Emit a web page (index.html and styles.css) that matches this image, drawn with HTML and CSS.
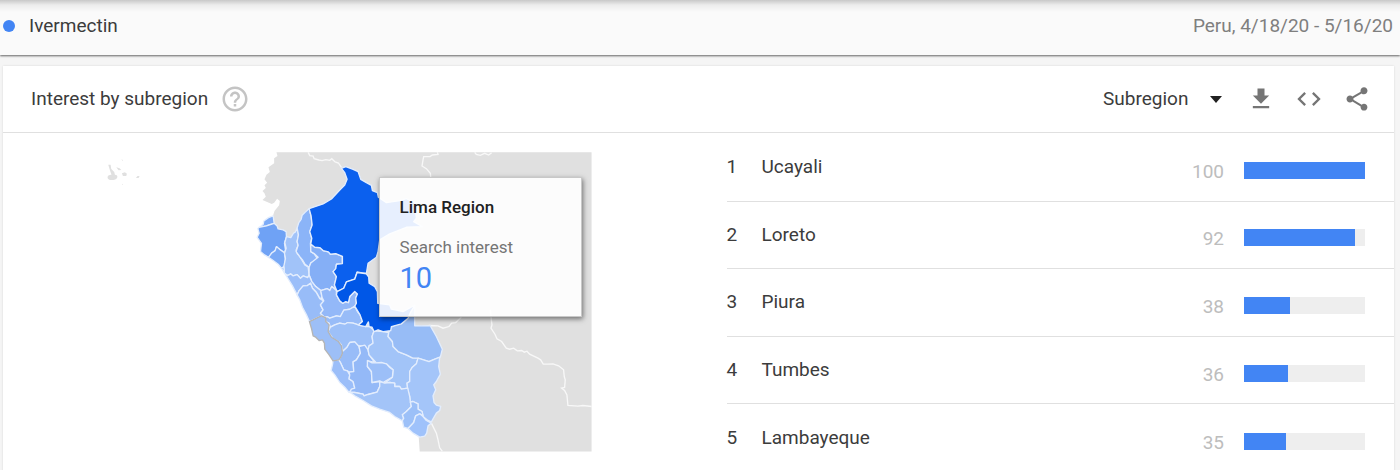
FILE: index.html
```html
<!DOCTYPE html>
<html lang="en">
<head>
    <meta charset="UTF-8">
    <meta name="viewport" content="width=device-width, initial-scale=1.0">
    <title>Interest by subregion</title>
    <link rel="stylesheet" href="styles.css">
</head>
<body>
    <header class="topbar">
        <span class="term"><span class="dot"></span>Ivermectin</span>
        <span class="range">Peru, 4/18/20 - 5/16/20</span>
    </header>

    <main class="card">
        <div class="card-header">
            <h2>Interest by subregion</h2>
            <button type="button" class="icon-button help" aria-label="Help">
                <svg width="30" height="30" viewBox="0 0 24 24"><path d="M11 18h2v-2h-2v2zm1-16C6.480 2 2 6.480 2 12s4.480 10 10 10 10-4.480 10-10S17.520 2 12 2zm0 18c-4.410 0-8-3.590-8-8s3.590-8 8-8 8 3.590 8 8-3.590 8-8 8zm0-14c-2.210 0-4 1.790-4 4h2c0-1.100.9-2 2-2s2 .9 2 2c0 2-3 1.750-3 5h2c0-2.250 3-2.500 3-5 0-2.210-1.790-4-4-4z"/></svg>
            </button>
            <div class="tools">
                <div class="picker">
                    <select class="resolution" aria-label="Resolution">
                        <option>Subregion</option>
                        <option>City</option>
                    </select>
                    <svg class="arrow" width="12" height="7" viewBox="0 0 12 7"><path d="M0 0h12L6 7z"/></svg>
                </div>
                <button type="button" class="icon-button" aria-label="Download">
                    <svg width="28" height="28" viewBox="0 0 24 24"><path d="M19 9h-4V3H9v6H5l7 7 7-7zM5 18v2h14v-2H5z"/></svg>
                </button>
                <button type="button" class="icon-button" aria-label="Embed">
                    <svg width="28" height="28" viewBox="0 0 24 24"><path d="M9.400 16.600L4.800 12l4.600-4.600L8 6l-6 6 6 6 1.400-1.400zm5.200 0l4.600-4.600-4.600-4.600L16 6l6 6-6 6-1.400-1.400z"/></svg>
                </button>
                <button type="button" class="icon-button" aria-label="Share">
                    <svg width="28" height="28" viewBox="0 0 24 24"><path d="M18 16.080c-.76 0-1.440.3-1.960.77L8.910 12.700c.05-.23.09-.46.09-.7s-.04-.47-.09-.7l7.050-4.110c.54.5 1.250.81 2.040.81 1.660 0 3-1.340 3-3s-1.340-3-3-3-3 1.340-3 3c0 .24.04.47.09.7L8.040 9.810C7.500 9.310 6.790 9 6 9c-1.660 0-3 1.340-3 3s1.340 3 3 3c.79 0 1.500-.31 2.040-.81l7.120 4.160c-.05.21-.08.43-.08.65 0 1.610 1.310 2.920 2.920 2.920s2.920-1.310 2.920-2.920-1.310-2.920-2.920-2.920z"/></svg>
                </button>
            </div>
        </div>

        <div class="card-body">
            <div class="map">
                <svg class="map-svg" viewBox="-711 36 2088 900">
                    <!-- neighbouring countries -->
                    <g class="land">
                        <path d="M110 37H1056V935H540L537 890 500 800 300 600 250 400 120 300 103 250 99 230 104 213 118 196 120 183 112 176 103 188 96 192 82 186 68 180 78 170 74 160 68 153 78 144 74 136 82 128 74 118 80 104 90 96 86 82 103 70 103 55 113 48Z"/>
                        <path d="M-395 74l7 0 2 13 9 9 2 8-10 1-5-14zM-396 108c6-6 26-6 28 0 2 9-8 13-18 12-9 0-13-6-10-12zM-371 82l10 3 5 5-8 1zM-354 100l9-3 6 4-2 7-10 0zM-312 114l5-6 6 0-3 6zM-356 58l5 2 0 3zM-353 131l3 2-3 2z"/>
                    </g>
                    <g class="border">
                        <path d="M205 37L210 47 220 48 223 56 237 60 247 62 258 59 270 61 276 56 286 66 296 69 305 82"/>
                        <path d="M593 37L595 43 578 45 571 50 552 50 550 60 547 78 560 86 572 100 573 112"/>
                        <path d="M705 37L710 43 722 46 735 40 747 45 756 38"/>
                        <path d="M525 558L545 560 570 557 595 558 610 565 628 560 636 550 648 548 665 532"/>
                        <path d="M752 510L755 540 757 555 754 565 766 583 772 597 786 605 800 625 810 628 822 625 833 633 846 632 854 637 862 634 870 643 895 655 903 660 911 673 925 673 940 672 957 678 972 690 974 710 977 720 975 743 966 745 975 752 982 765 985 797 1015 799 1030 797 1056 800"/>
                        <path d="M575 850L590 880 595 900 600 924 608 935"/>
                    </g>
                    <!-- regions of Peru, north to south -->
                    <g class="region">
                        <path fill="#7cabf7" d="M100 228L103 250 90 254 80 258 60 262 70 253 72 243 86 233Z"/>
                        <path fill="#6fa2f5" d="M58 262L80 258 103 250 112 258 115 267 130 270 139 275 140 290 134 310 137 330 134 340 122 330 115 326 110 320 106 332 96 339 88 353 74 345 62 335 65 310 52 292 58 280 54 266Z"/>
                        <path fill="#79a9f6" d="M86 352L96 339 106 332 110 320 122 330 134 338 137 360 133 382 125 385 115 373 100 362Z"/>
                        <path fill="#a1c3f9" d="M140 290L153 293 161 280 167 276 172 264 176 285 172 305 175 316 169 330 173 342 180 350 188 363 195 375 205 381 208 405 204 413 190 408 182 415 172 404 160 408 153 402 143 407 134 400 132 380 137 355 134 340 139 325 135 308Z"/>
                        <path fill="#8bb4f8" d="M172 264L177 248 184 238 187 226 195 218 208 206 214 228 217 255 210 275 216 295 212 310 213 335 223 341 230 352 235 350 230 361 213 369 208 382 196 373 188 360 180 350 169 335 175 316 172 305 176 285Z"/>
                        <path fill="#85aff6" d="M213 312L225 322 240 323 250 332 266 336 272 343 288 341 308 349 308 371 290 373 288 386 280 395 290 410 284 435 290 449 276 440 270 452 262 446 243 452 228 440 216 425 208 405 208 382 213 369 235 352 223 341 213 335Z"/>
                        <path fill="#9bbef9" d="M132 380L134 400 143 407 153 402 160 408 172 404 182 415 190 408 204 413 208 405 216 425 228 440 243 452 247 473 240 476 230 458 218 445 212 430 203 437 190 438 178 452 172 465 158 438 144 415 125 385Z"/>
                        <path fill="#98bcf8" d="M172 465L178 452 190 438 203 437 212 430 218 445 230 458 240 476 252 483 242 495 250 510 242 520 255 533 245 528 232 534 220 540 209 545 200 525 188 502 180 480Z"/>
                        <path fill="#93b8f8" d="M243 452L262 446 270 452 276 440 290 452 290 465 300 483 309 490 318 485 326 488 330 470 345 455 353 462 348 474 350 490 345 499 330 508 312 511 302 530 290 528 270 535 262 530 255 533 242 520 250 510 242 495 252 483 247 473Z"/>
                        <path fill="#98bcf8" d="M255 533L262 530 270 535 290 528 302 530 312 511 330 508 345 499 353 515 361 525 368 545 356 555 340 550 324 548 315 553 300 550 285 555 272 562 268 550 258 545Z"/>
                        <path fill="#9dc0f8" d="M272 562L285 555 300 550 315 553 324 548 340 550 356 555 378 560 390 560 403 573 397 590 400 610 388 618 385 630 375 618 355 618 345 606 330 608 322 622 308 635 305 615 296 605 280 597 272 585 265 575Z"/>
                        <path fill="#98bcf8" d="M308 635L322 622 330 608 345 606 358 620 362 640 350 660 340 666 342 695 328 697 323 693 312 690 302 668 297 660 303 650Z"/>
                        <path fill="#9bbef9" d="M280 662L297 660 302 668 312 690 323 693 330 705 328 717 340 725 345 745 335 750 328 758 315 742 300 728 285 705 274 692 278 675Z"/>
                        <path fill="#94b9f7" d="M358 620L375 616 385 630 388 645 405 668 385 663 383 680 395 695 397 728 420 725 420 740 412 757 385 764 373 768 370 763 345 758 330 757 335 748 345 745 340 725 328 717 330 705 328 697 342 695 340 666 350 660 362 640Z"/>
                        <path fill="#a2c4f8" d="M397 590L403 573 430 575 447 578 445 590 458 605 460 620 475 635 500 645 518 654 535 655 530 672 518 682 510 695 510 725 502 730 504 745 485 748 480 740 465 740 465 730 450 728 435 730 458 712 460 690 440 672 410 669 388 645 385 630 388 618 400 610Z"/>
                        <path fill="#9cbff8" d="M383 662L397 669 410 669 425 668 440 672 450 683 460 690 458 712 440 722 430 728 420 723 397 728 395 695 383 680Z"/>
                        <path fill="#97bcf6" d="M447 578L455 562 485 545 505 532 512 515 525 498 525 558 572 558 590 590 608 628 602 652 580 660 568 665 535 655 518 654 500 645 475 635 460 620 458 605 445 590Z"/>
                        <path fill="#a4c5f9" d="M535 655L568 665 580 660 600 652 597 680 602 703 590 725 582 735 588 750 580 768 583 788 590 796 603 800 600 812 590 820 575 846 565 842 550 830 547 815 535 808 535 792 520 785 512 787 510 770 504 750 502 730 510 725 510 695 518 682 530 672Z"/>
                        <path fill="#a3c4f8" d="M330 757L345 758 370 763 373 768 385 764 412 757 420 740 420 725 435 730 450 728 465 730 465 740 480 740 485 748 504 745 510 770 512 787 515 800 500 815 488 825 492 835 488 843 465 830 450 818 420 808 395 798 370 782 345 768Z"/>
                        <path fill="#9cc0f8" d="M512 787L520 785 535 792 535 808 547 815 550 828 540 822 528 828 522 848 505 866 492 862 488 843 492 835 488 825 500 815 515 800Z"/>
                        <path fill="#9fc2fb" d="M505 866L522 848 528 828 540 822 550 830 560 842 575 850 565 858 561 880 555 889 540 892 520 880Z"/>
                        <path fill="#0b60ee" d="M208 206L250 192 275 177 300 150 315 135 322 118 315 98 305 85 318 80 340 88 355 95 363 118 380 128 395 136 398 152 413 158 416 172 440 188 480 182 500 176 525 188 530 235 522 245 548 260 500 262 450 282 420 300 415 335 410 352 385 370 380 400 370 400 352 396 345 418 320 426 312 445 292 455 284 435 290 410 280 395 288 386 290 373 308 371 308 349 288 341 272 343 266 336 250 332 240 323 225 322 213 312 216 295 210 275 217 255 214 228Z"/>
                        <path fill="#0057e7" d="M352 398L370 400 380 402 387 412 388 430 405 440 413 455 414 490 450 495 455 508 490 515 525 496 512 518 505 535 485 552 455 560 453 572 430 575 415 570 403 575 397 562 388 560 386 546 378 560 356 556 368 545 361 525 345 499 350 490 348 474 353 462 345 455 330 470 326 488 318 485 309 490 300 483 290 465 292 455 312 445 320 426 345 418Z"/>
                        <path class="hovered" fill="#9dbff7" d="M209 545L220 540 232 534 245 528 258 534 258 545 268 555 265 575 275 592 296 605 305 618 308 640 303 652 297 660 280 663 268 645 255 628 254 610 248 600 238 602 228 592 220 588 215 565Z"/>
                    </g>
                </svg>
                <div class="tooltip">
                    <h3>Lima Region</h3>
                    <p class="tooltip-label">Search interest</p>
                    <p class="tooltip-value">10</p>
                </div>
            </div>

            <ol class="ranking">
                <li>
                    <span class="rank">1</span>
                    <span class="name">Ucayali</span>
                    <span class="value">100</span>
                    <span class="bar"><span class="fill" style="width: 100%"></span></span>
                </li>
                <li>
                    <span class="rank">2</span>
                    <span class="name">Loreto</span>
                    <span class="value">92</span>
                    <span class="bar"><span class="fill" style="width: 92%"></span></span>
                </li>
                <li>
                    <span class="rank">3</span>
                    <span class="name">Piura</span>
                    <span class="value">38</span>
                    <span class="bar"><span class="fill" style="width: 38%"></span></span>
                </li>
                <li>
                    <span class="rank">4</span>
                    <span class="name">Tumbes</span>
                    <span class="value">36</span>
                    <span class="bar"><span class="fill" style="width: 36%"></span></span>
                </li>
                <li>
                    <span class="rank">5</span>
                    <span class="name">Lambayeque</span>
                    <span class="value">35</span>
                    <span class="bar"><span class="fill" style="width: 35%"></span></span>
                </li>
            </ol>
        </div>
    </main>
</body>
</html>
```
FILE: styles.css
```css
* {
    box-sizing: border-box;
}
body {
    margin: 0;
    background-color: #f5f5f5;
    color: #3c3c3c;
    font-family: Roboto, Arial, sans-serif;
    font-size: 19px;
    line-height: 24px;
}
h2, h3, p {
    margin: 0;
    font-size: 19px;
    font-weight: 400;
}
.topbar {
    display: flex;
    align-items: center;
    justify-content: space-between;
    height: 55px;
    padding: 0 7px 3px 3px;
    background: linear-gradient(#c8c8c8, #ececec 5px, #fafafa 12px);
    box-shadow: 0 1px 2px rgba(0, 0, 0, 0.6);
}
.term {
    display: flex;
    align-items: center;
    gap: 14px;
}
.dot {
    width: 12px;
    height: 12px;
    border-radius: 50%;
    background: #4285f4;
}
.range {
    color: #7f7f7f;
}
.card {
    margin: 11px 6px 0 3px;
    background: white;
    box-shadow: 0 0 2px rgba(0, 0, 0, 0.12);
}
.card-header {
    display: flex;
    align-items: center;
    height: 67px;
    padding: 0 23px 1px 28px;
    border-bottom: 1px solid #e0e0e0;
}
.icon-button {
    display: block;
    padding: 0;
    border: none;
    background: none;
    cursor: pointer;
}
.icon-button svg {
    display: block;
    fill: #757575;
}
.help {
    margin-left: 12px;
}
.help svg {
    fill: #c4c4c4;
}
.tools {
    display: flex;
    align-items: center;
    gap: 20px;
    margin-left: auto;
}
.picker {
    position: relative;
}
.resolution {
    appearance: none;
    width: 124px;
    padding: 0;
    border: none;
    background: none;
    color: #3c3c3c;
    font: inherit;
    cursor: pointer;
}
.arrow {
    position: absolute;
    top: 9px;
    right: 5px;
    fill: #212121;
    pointer-events: none;
}
.card-body {
    display: grid;
    grid-template-columns: 1fr 1fr;
}
.map {
    position: relative;
    padding-top: 19px;
}
.map-svg {
    display: block;
    width: 100%;
}
.land {
    fill: #e0e0e0;
}
.border {
    fill: none;
    stroke: #f8f8f8;
    stroke-width: 4;
}
.region {
    stroke: #e3edfd;
    stroke-width: 4;
    stroke-linejoin: round;
}
.hovered {
    stroke: #b4b4b4;
}
.tooltip {
    position: absolute;
    top: 44px;
    left: 54%;
    width: 203px;
    padding: 17px 20px 19px;
    background: rgba(255, 255, 255, 0.9);
    border: 1px solid #c8c8c8;
    box-shadow: 1px 2px 5px rgba(0, 0, 0, 0.5);
}
.tooltip h3 {
    margin-bottom: 16px;
    color: #212121;
    font-size: 17px;
    font-weight: 500;
}
.tooltip-label {
    color: #757575;
    font-size: 17px;
}
.tooltip-value {
    color: #4285f4;
    font-size: 29px;
    line-height: 38px;
}
.ranking {
    display: grid;
    grid-auto-rows: 1fr;
    height: 338px;
    margin: 1px 0 0 28px;
    padding: 0;
    list-style: none;
}
.ranking li {
    display: flex;
    align-items: center;
    padding-right: 29px;
    border-bottom: 1px solid #e0e0e0;
}
.ranking li:last-child {
    border-bottom: none;
}
.rank {
    width: 35px;
}
.name {
    flex: 1;
}
.value {
    padding-top: 9px;
    color: #bdbdbd;
}
.bar {
    width: 121px;
    height: 17px;
    margin: 6px 0 0 20px;
    background: #eeeeee;
}
.fill {
    display: block;
    height: 100%;
    background: #4285f4;
}
```
